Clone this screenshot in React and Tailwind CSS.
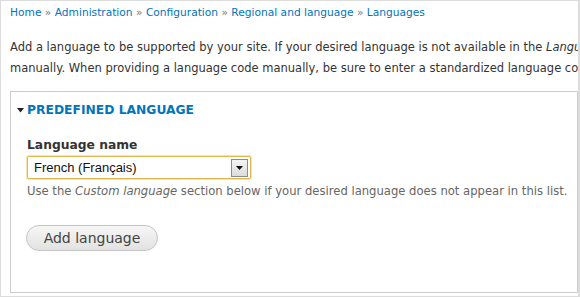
export default function App() {
  const crumbs = ["Home", "Administration", "Configuration", "Regional and language", "Languages"];

  return (
    <div
      className="w-[580px] h-[297px] overflow-hidden bg-white border-l border-t border-r-2 border-b border-[#dcdcdc] relative"
      style={{ fontFamily: '"DejaVu Sans", Verdana, sans-serif' }}
    >
      {/* breadcrumb */}
      <div className="pl-[9px] pt-[4px] h-[20px] text-[10.65px] leading-[16px] whitespace-nowrap text-[#777]">
        {crumbs.map((c, i) => (
          <span key={c}>
            {i > 0 && <span className="text-[#777]"> » </span>}
            <a className="text-[#0074bd]">{c}</a>
          </span>
        ))}
      </div>

      {/* description */}
      <div className="pl-[9px] pt-[16px] text-[11.5px] leading-[21px] text-[#333] whitespace-nowrap">
        <div>
          Add a language to be supported by your site. If your desired language is not available in the{" "}
          <em>Language name</em> drop-down, click <em>Custom language</em> and provide a language code
        </div>
        <div>
          manually. When providing a language code manually, be sure to enter a standardized language code, since this
          code may be used by browsers
        </div>
      </div>

      {/* fieldset */}
      <div className="ml-[9px] mt-[12px] w-[568px] h-[202px] border border-[#ccc]">
        <div className="flex items-center gap-[3px] pl-[6px] pt-[10px] h-[26px]">
          <svg width="7" height="5" viewBox="0 0 7 5">
            <path d="M0 0 L7 0 L3.5 4.5 Z" fill="#222" />
          </svg>
          <span className="text-[12.3px] font-bold uppercase text-[#0074bd]">Predefined language</span>
        </div>

        <div className="pl-[16px] pt-[19px]">
          <div className="text-[12.3px] font-bold text-[#333] leading-[16px]">Language name</div>
          <div className="mt-[3px] w-[224px] h-[23px] border border-[#e4b650] rounded-[2px] shadow-[0_0_0_1px_#f7e3b0] flex items-center justify-between pl-[6px] pr-[2px] bg-white">
            <span
              className="text-[13px] text-[#111]"
              style={{ fontFamily: '"Liberation Sans", Arial, sans-serif' }}
            >
              French (Français)
            </span>
            <div className="w-[17px] h-[18px] border border-[#8c8c8c] bg-gradient-to-b from-[#f4f4f4] to-[#dcdcdc] flex items-center justify-center">
              <svg width="7" height="4" viewBox="0 0 7 4">
                <path d="M0 0 L7 0 L3.5 4 Z" fill="#111" />
              </svg>
            </div>
          </div>
          <div className="mt-[5px] text-[11.6px] leading-[14px] text-[#666] whitespace-nowrap">
            Use the <em>Custom language</em> section below if your desired language does not appear in this list.
          </div>

          <button className="-ml-[1px] mt-[27px] w-[132px] h-[26px] rounded-full border border-[#c4c4c4] bg-gradient-to-b from-[#f6f6f6] to-[#e2e2e2] text-[14px] text-[#444] leading-[24px]">
            Add language
          </button>
        </div>
      </div>
    </div>
  );
}
